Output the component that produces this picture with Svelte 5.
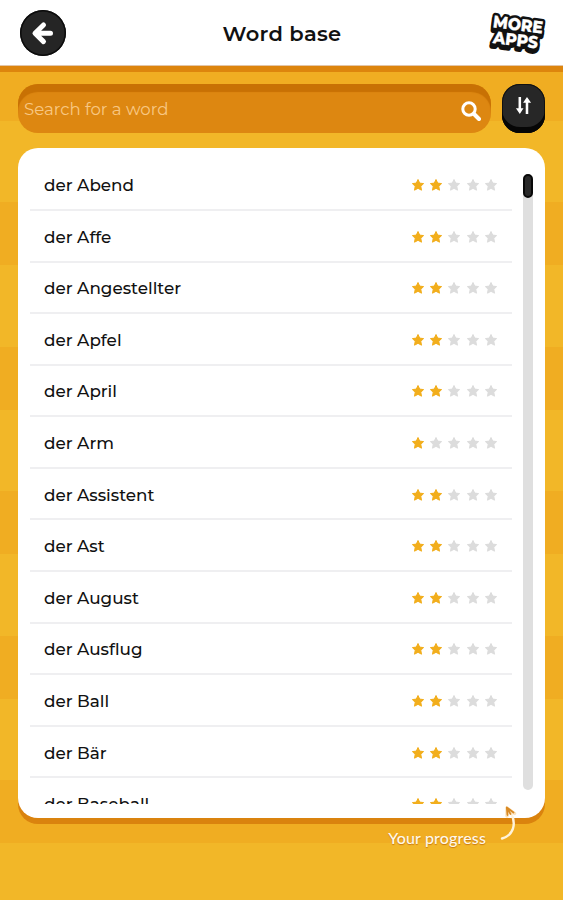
<script lang="ts">
	type Word = { text: string; level: number };

	const MAX_LEVEL = 5;

	const words: Word[] = [
		{ text: 'der Abend', level: 2 },
		{ text: 'der Affe', level: 2 },
		{ text: 'der Angestellter', level: 2 },
		{ text: 'der Apfel', level: 2 },
		{ text: 'der April', level: 2 },
		{ text: 'der Arm', level: 1 },
		{ text: 'der Assistent', level: 2 },
		{ text: 'der Ast', level: 2 },
		{ text: 'der August', level: 2 },
		{ text: 'der Ausflug', level: 2 },
		{ text: 'der Ball', level: 2 },
		{ text: 'der Bär', level: 2 },
		{ text: 'der Baseball', level: 2 }
	];

	let query = $state('');
	let descending = $state(false);

	const visible = $derived.by(() => {
		const found = words.filter((w) => w.text.toLowerCase().includes(query.toLowerCase()));
		return descending ? found.reverse() : found;
	});
</script>

<div class="screen">
	<header>
		<button type="button" class="back" aria-label="Back">
			<svg width="46" height="46" viewBox="0 0 46 46">
				<path d="M23.5 15 L15 23.3 L23.5 31.6 M16 23.3 H30.5" fill="none" stroke="#fff" stroke-width="5" stroke-linecap="round" stroke-linejoin="round" />
			</svg>
		</button>
		<h1>Word base</h1>
		<button type="button" class="more" aria-label="More apps">
			<svg width="60" height="46" viewBox="0 0 60 46">
				<!-- dark outline, drawn twice for the thick bottom edge, with the white letters on top -->
				{#each ['translate(-0.5 3)', '', 'face'] as layer}
					<g class="logo" class:face={layer === 'face'} transform="{layer === 'face' ? '' : layer} rotate(7 30 23)">
						<text x="4" y="20.5" textLength="50" lengthAdjust="spacingAndGlyphs">MORE</text>
						<text x="6" y="36" textLength="45" lengthAdjust="spacingAndGlyphs">APPS</text>
					</g>
				{/each}
			</svg>
		</button>
	</header>

	<div class="toolbar">
		<label class="search">
			<input type="text" placeholder="Search for a word" bind:value={query} />
			<svg width="20" height="20" viewBox="0 0 20 20" fill="none" stroke="#fff">
				<circle cx="8" cy="8" r="6.2" stroke-width="3" />
				<path d="M13 13 L18 18" stroke-width="4" stroke-linecap="round" />
			</svg>
		</label>
		<button type="button" class="sort" aria-label="Sort" onclick={() => (descending = !descending)}>
			<svg width="17" height="19" viewBox="0 0 16 18" fill="none" stroke="#fff" stroke-width="2.4">
				<path d="M4.5 1 V14 M11.3 17 V4" />
				<path d="M0.8 11.5 H8 L4.5 17 Z M7.6 6.5 H15.2 L11.3 1 Z" fill="#fff" stroke="none" />
			</svg>
		</button>
	</div>

	<main class="card">
		<ul>
			{#each visible as word}
				<li>
					<span>{word.text}</span>
					<div class="stars">
						{#each Array(MAX_LEVEL) as _, i}
							<svg class:on={i < word.level} width="14" height="14" viewBox="0 0 14 14">
								<path d="M7 1.5 L8.7 5.1 L12.6 5.6 L9.8 8.3 L10.5 12.2 L7 10.3 L3.5 12.2 L4.2 8.3 L1.4 5.6 L5.3 5.1 Z" />
							</svg>
						{/each}
					</div>
				</li>
			{/each}
		</ul>
		<div class="track"><div class="thumb"></div></div>
	</main>

	<footer>
		<span>Your progress</span>
		<svg width="20" height="38" viewBox="0 0 20 38">
			<path d="M3 34.5 C15 31 17 20 12.5 10" fill="none" stroke="#fff3dc" stroke-width="2.4" stroke-linecap="round" />
			<path d="M8 12 L8 4 L15.5 9.5" fill="none" stroke="#fbe3bd" stroke-width="3.4" stroke-linejoin="round" stroke-linecap="round" />
			<path d="M8.5 11 L7.8 3.5 L14.5 8.5 M8 4 L11.5 10" fill="none" stroke="#d98a25" stroke-width="1.8" stroke-linejoin="round" stroke-linecap="round" />
		</svg>
	</footer>
</div>

<style>
	:global(body) {
		margin: 0;
	}

	.screen {
		box-sizing: border-box;
		height: 900px;
		display: flex;
		flex-direction: column;
		overflow: hidden;
		font-family: Montserrat, Inter, sans-serif;
		color: #111;
		background: repeating-linear-gradient(#f0ad22 0 63px, #f2b728 63px 144.5px) 0 58px / 100% 100% #f2b728;
	}

	button {
		padding: 0;
		border: 0;
		background: none;
		cursor: pointer;
	}

	header {
		box-sizing: border-box;
		flex: none;
		height: 72px;
		padding: 0 15px 0 20px;
		display: grid;
		grid-template-columns: 60px 1fr 60px;
		align-items: center;
		background: #fff;
		border-bottom: 6px solid #dd850d;
		box-shadow: inset 0 -1px 0 #e3c6a8;
	}

	.back {
		width: 46px;
		height: 46px;
		border-radius: 50%;
		background: #252525;
		box-shadow: inset 0 0 0 1.5px #0c0c0c;
	}

	.back svg,
	.more svg {
		display: block;
	}

	h1 {
		margin: 1px 0 0;
		padding-right: 4px;
		font-size: 21px;
		font-weight: 600;
		letter-spacing: 0.3px;
		text-align: center;
	}

	.logo {
		font: 800 17px Montserrat, Inter, sans-serif;
		fill: #111;
		stroke: #111;
		stroke-width: 5.5px;
		stroke-linejoin: round;
	}

	.logo.face {
		fill: #fff;
		stroke: #fff;
		stroke-width: 0.3px;
	}

	.toolbar {
		flex: none;
		display: flex;
		gap: 11px;
		padding: 12px 18px 0;
	}

	.search {
		box-sizing: border-box;
		flex: 1;
		height: 49px;
		padding: 1px 10px 0 6px;
		display: flex;
		align-items: center;
		border-radius: 20px;
		background: #dd8711;
		box-shadow: inset 0 8px 1px #c87104;
	}

	.search svg {
		margin-top: 4px;
	}

	input {
		flex: 1;
		min-width: 0;
		padding: 0;
		border: 0;
		outline: 0;
		background: none;
		font: 400 16.6px Montserrat, Inter, sans-serif;
		color: #fff;
	}

	input::placeholder {
		color: #f8c784;
		opacity: 1;
	}

	.sort {
		width: 43px;
		height: 49px;
		padding-bottom: 6px;
		display: flex;
		align-items: center;
		justify-content: center;
		border-radius: 18px;
		background: #272727;
		box-shadow: inset 0 -6px 0 #060606, inset 0 0 0 1px #111;
	}

	.card {
		box-sizing: border-box;
		flex: none;
		height: 670px;
		margin: 15px 18px 0;
		padding: 11.4px 12px 14px;
		display: flex;
		gap: 11px;
		border-radius: 20px;
		background: #fff;
		box-shadow: 0 6px 0 #da830e;
	}

	ul {
		flex: 1;
		margin: 0;
		padding: 0;
		list-style: none;
		overflow: hidden;
	}

	li {
		box-sizing: border-box;
		height: 51.58px;
		padding: 2px 14px 0 14px;
		display: flex;
		align-items: center;
		justify-content: space-between;
		border-bottom: 2px solid #efeff1;
		font-size: 16.8px;
		font-weight: 500;
	}

	.stars {
		display: flex;
		gap: 4.3px;
	}

	.stars svg {
		fill: #dcdcdc;
		stroke: #dcdcdc;
		stroke-width: 1px;
		stroke-linejoin: round;
	}

	.stars .on {
		fill: #f2ae1c;
		stroke: #f2ae1c;
	}

	.track {
		width: 10px;
		height: 616px;
		margin-top: 14.6px;
		border-radius: 5px;
		background: #dfdfdf;
	}

	.thumb {
		box-sizing: border-box;
		height: 24px;
		border: 2px solid #080808;
		border-radius: 5px;
		background: #292929;
	}

	footer {
		display: flex;
		justify-content: flex-end;
		align-items: flex-start;
		gap: 13px;
		margin-top: -14px;
		padding-right: 44px;
		position: relative;
	}

	footer span {
		margin-top: 24px;
		font: 500 16px/20px Lato, sans-serif;
		letter-spacing: 0.15px;
		color: #fff8ea;
		text-shadow: 0 1px 1px #c87812;
	}
</style>
